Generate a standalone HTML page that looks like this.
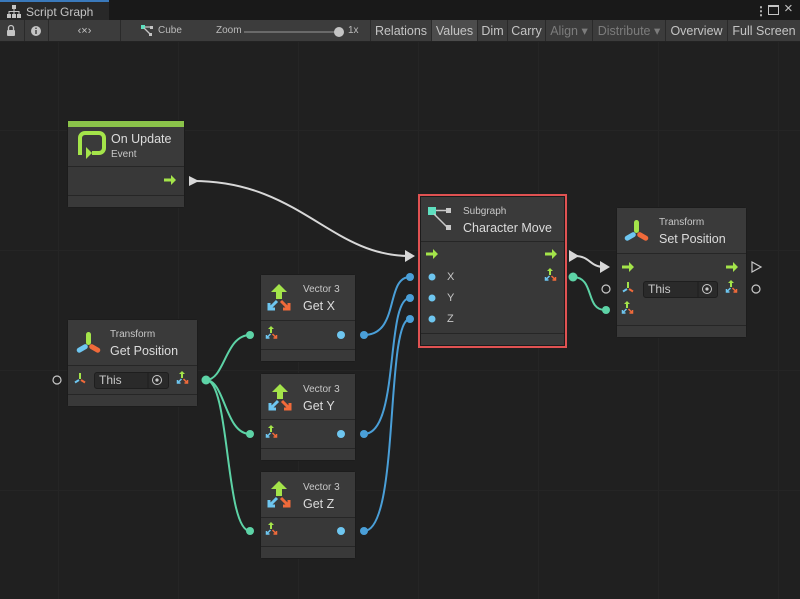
<!DOCTYPE html><html><head><style>
*{margin:0;padding:0;box-sizing:border-box}
body{width:800px;height:599px;overflow:hidden;background:#202020;font-family:"Liberation Sans",sans-serif;position:relative}
.grid{position:absolute;left:0;top:42px;width:800px;height:557px;background-image:linear-gradient(#252525 1px,transparent 1px),linear-gradient(90deg,#252525 1px,transparent 1px);background-size:120px 120px;background-position:58px 88px}
.tabbar{position:absolute;left:0;top:0;width:800px;height:20px;background:#191919}
.tab{position:absolute;left:0;top:0;width:109px;height:21px;background:#282828;border-top:2px solid #3a79bb;color:#c4c4c4;font-size:12px;padding:3px 0 0 26px}
.tb{position:absolute;left:0;top:20px;width:800px;height:22px;background:#3c3c3c;border-bottom:1px solid #232323;color:#c4c4c4;font-size:12.5px}
.tb span{position:absolute;top:0;height:21px;line-height:22px;border-left:1px solid #2a2a2a}
.node{position:absolute;background:#383838;border:1px solid #1c1c1c;border-radius:3px;color:#d2d2d2}
.hd{position:absolute;left:0;right:0;top:0;border-bottom:1px solid #262626;background:#3a3a3a}
.ft{position:absolute;left:0;right:0;bottom:0;height:12px;border-top:1px solid #262626;background:#393939}
.sm{position:absolute;font-size:10px;color:#c8c8c8}
.lg{position:absolute;font-size:12.5px;color:#dcdcdc}
.fld{position:absolute;background:#2a2a2a;border:1px solid #1e1e1e;border-radius:3px;font-size:12px;color:#c8c8c8;padding-left:4px;line-height:14px}
svg{position:absolute;left:0;top:0}
</style></head><body>
<div class="grid"></div>
<div class="tabbar"></div>
<div class="tab">Script Graph</div>
<svg width="20" height="20" style="left:7px;top:4px"><g fill="#c4c4c4"><rect x="5" y="1" width="4" height="4"/><rect x="6.5" y="5" width="1" height="3"/><rect x="1.5" y="7" width="11" height="1"/><rect x="1.5" y="7" width="1" height="3"/><rect x="6.5" y="7" width="1" height="3"/><rect x="11.5" y="7" width="1" height="3"/><rect x="0" y="10" width="4" height="4"/><rect x="5" y="10" width="4" height="4"/><rect x="10" y="10" width="4" height="4"/></g></svg>
<div style="position:absolute;left:755px;top:4px;color:#c4c4c4;font-size:12px;font-weight:bold">⋮</div>
<div style="position:absolute;left:768px;top:5px;width:11px;height:10px;border:1px solid #c4c4c4;border-top-width:2px"></div>
<div style="position:absolute;left:784px;top:0px;color:#c4c4c4;font-size:15px">×</div>
<div class="tb">
<span style="left:0;width:24px;border:0"></span>
<span style="left:24px;width:24px"></span>
<span style="left:48px;width:72px;text-align:center;font-size:11px">‹×›</span>
<span style="left:120px;width:250px;font-size:10px;color:#bbb"><b style="position:absolute;left:37px;font-weight:normal">Cube</b><b style="position:absolute;left:95px;font-weight:normal">Zoom</b><b style="position:absolute;left:227px;font-weight:normal">1x</b></span>
<span style="left:370px;width:61px;text-align:center">Relations</span>
<span style="left:431px;width:46px;text-align:center;background:#4c4c4c">Values</span>
<span style="left:477px;width:30px;text-align:center">Dim</span>
<span style="left:507px;width:38px;text-align:center">Carry</span>
<span style="left:545px;width:47px;text-align:center;color:#7c7c7c">Align ▾</span>
<span style="left:592px;width:73px;text-align:center;color:#7c7c7c">Distribute ▾</span>
<span style="left:665px;width:62px;text-align:center">Overview</span>
<span style="left:727px;width:73px;text-align:center">Full Screen</span>
</div>
<svg width="800" height="45">
<g fill="#c4c4c4"><rect x="7" y="30" width="8" height="6" rx="1"/><path d="M8.5 30v-2a2.5 2.5 0 0 1 5 0v2" stroke="#c4c4c4" fill="none" stroke-width="1.3"/><circle cx="36" cy="31" r="5"/></g>
<rect x="35.3" y="30" width="1.4" height="4" fill="#3c3c3c"/><rect x="35.3" y="27.6" width="1.4" height="1.4" fill="#3c3c3c"/>
<rect x="141" y="25" width="4" height="4" fill="#5fe0c0"/><path d="M145 27h6M144 28l6 6" stroke="#c4c4c4" stroke-width="1.3"/><rect x="150" y="26" width="3" height="3" fill="#c4c4c4"/><rect x="149" y="33" width="3" height="3" fill="#c4c4c4"/>
<rect x="244" y="31" width="96" height="2" fill="#6a6a6a"/><circle cx="339" cy="32" r="5" fill="#c4c4c4"/>
</svg>

<svg width="800" height="599" style="top:0">
<g fill="none" stroke-width="2">
<path d="M193 181 C300 181 330 256 410 256" stroke="#d8d8d8"/>
<path d="M575 256 C590 256 590 267 604 267" stroke="#d8d8d8"/>
<g stroke="#5dd3a6"><path d="M206 380 C225 380 225 335 250 335"/><path d="M206 380 C225 380 225 434 250 434"/><path d="M206 380 C230 380 225 531 250 531"/><path d="M573 277 C595 277 585 310 605 310"/></g>
<g stroke="#4a9fd8"><path d="M364 335 C400 335 385 277 410 277"/><path d="M364 434 C400 434 385 298 410 298"/><path d="M364 531 C400 531 385 319 410 319"/></g>
</g>
<g fill="#d8d8d8"><path d="M189 176l10 5-10 5z"/><path d="M405 250l10 6-10 6z"/><path d="M569 250l10 6-10 6z"/><path d="M600 261l10 6-10 6z"/></g>
<g fill="#5dd3a6"><circle cx="206" cy="380" r="4.5"/><circle cx="250" cy="335" r="4"/><circle cx="250" cy="434" r="4"/><circle cx="250" cy="531" r="4"/><circle cx="573" cy="277" r="4.5"/><circle cx="606" cy="310" r="4"/></g>
<g fill="#4a9fd8"><circle cx="364" cy="335" r="4"/><circle cx="364" cy="434" r="4"/><circle cx="364" cy="531" r="4"/><circle cx="410" cy="277" r="4"/><circle cx="410" cy="298" r="4"/><circle cx="410" cy="319" r="4"/></g>
<g fill="none" stroke="#c8c8c8" stroke-width="1.2"><circle cx="57" cy="380" r="4"/><circle cx="606" cy="289" r="4"/><circle cx="756" cy="289" r="4"/><path d="M752 262l9 5-9 5z"/></g>
</svg>

<!-- On Update -->
<div class="node" style="left:67px;top:120px;width:118px;height:88px">
<div style="position:absolute;left:0;right:0;top:0;height:6px;background:#8bc34a"></div>
<div class="hd" style="top:6px;height:40px"></div>
<div class="lg" style="left:43px;top:11px">On Update</div><div class="sm" style="left:43px;top:28px">Event</div>
<div class="ft"></div>
</div>
<!-- Subgraph -->
<div style="position:absolute;left:418px;top:194px;width:149px;height:154px;border:2px solid #e05252"></div>
<div class="node" style="left:420px;top:196px;width:145px;height:150px">
<div class="hd" style="height:45px"></div>
<div class="sm" style="left:42px;top:9px">Subgraph</div><div class="lg" style="left:42px;top:24px">Character Move</div>
<div style="position:absolute;left:26px;top:70px;font-size:11px;color:#c8c8c8;line-height:21px">X<br>Y<br>Z</div>
<div class="ft"></div>
</div>
<!-- Set Position -->
<div class="node" style="left:616px;top:207px;width:131px;height:131px">
<div class="hd" style="height:46px"></div>
<div class="sm" style="left:42px;top:9px">Transform</div><div class="lg" style="left:42px;top:24px">Set Position</div>
<div class="fld" style="left:26px;top:73px;width:75px;height:17px">This</div>
<div class="ft"></div>
</div>
<!-- Get Position -->
<div class="node" style="left:67px;top:319px;width:131px;height:88px">
<div class="hd" style="height:46px"></div>
<div class="sm" style="left:42px;top:9px">Transform</div><div class="lg" style="left:42px;top:24px">Get Position</div>
<div class="fld" style="left:26px;top:52px;width:75px;height:17px">This</div>
<div class="ft"></div>
</div>
<!-- Get X/Y/Z -->
<div class="node" style="left:260px;top:274px;width:96px;height:88px"><div class="hd" style="height:46px"></div><div class="sm" style="left:42px;top:9px">Vector 3</div><div class="lg" style="left:42px;top:24px">Get X</div><div class="ft"></div></div>
<div class="node" style="left:260px;top:373px;width:96px;height:88px"><div class="hd" style="height:46px"></div><div class="sm" style="left:42px;top:10px">Vector 3</div><div class="lg" style="left:42px;top:25px">Get Y</div><div class="ft"></div></div>
<div class="node" style="left:260px;top:471px;width:96px;height:88px"><div class="hd" style="height:46px"></div><div class="sm" style="left:42px;top:10px">Vector 3</div><div class="lg" style="left:42px;top:25px">Get Z</div><div class="ft"></div></div>

<svg width="800" height="599">
<defs>
<g id="arr"><path d="M0 -1.5h7v-3.5l5 5-5 5v-3.5h-7z" fill="#a4e44a"/></g>
<g id="v3s"><path d="M5 0l3 3h-2v4h-2v-4h-2z" fill="#a4e44a"/><path d="M4.5 8l-4 4m0-3v3h3" stroke="#6ec6f0" stroke-width="1.5" fill="none"/><path d="M6.5 8l4 4m0-3v3h-3" stroke="#f06a3a" stroke-width="1.5" fill="none"/></g>
<g id="v3b"><path d="M12 0l8 8h-5v7h-6v-7h-5z" fill="#a4e44a"/><path d="M10 17l-8 8m0-6v6h6" stroke="#6ec6f0" stroke-width="3" fill="none"/><path d="M14 17l8 8m0-6v6h-6" stroke="#f06a3a" stroke-width="3" fill="none"/></g>
<g id="trb"><rect x="10" y="0" width="5" height="13" rx="2.5" fill="#a4e44a"/><rect x="0" y="14" width="12" height="5" rx="2.5" transform="rotate(-30 6 16)" fill="#6ec6f0"/><rect x="13" y="14" width="12" height="5" rx="2.5" transform="rotate(30 19 16)" fill="#f06a3a"/></g>
<g id="trs"><rect x="4" y="0" width="2" height="6" fill="#a4e44a"/><path d="M4 7l-4 2.5" stroke="#6ec6f0" stroke-width="2"/><path d="M6 7l4 2.5" stroke="#f06a3a" stroke-width="2"/></g>
</defs>
<path d="M80 155v-17a5 5 0 0 1 5-5h14a5 5 0 0 1 5 5v10a5 5 0 0 1-5 5h-7" stroke="#a4e44a" stroke-width="4" fill="none"/><path d="M86 147l6 6-6 6z" fill="#a4e44a"/>
<use href="#arr" x="164" y="180"/>
<rect x="428" y="207" width="8" height="8" fill="#5fe0c0"/><rect x="446" y="208" width="5" height="5" fill="#c8c8c8"/><rect x="446" y="225" width="5" height="5" fill="#c8c8c8"/><path d="M436 210.5h10M434 214l13 13" stroke="#c8c8c8" stroke-width="1.5"/>
<use href="#arr" x="426" y="254"/><use href="#arr" x="545" y="254"/><use href="#v3s" x="545" y="268"/>
<g fill="#6ec6f0"><circle cx="432" cy="277" r="3.5"/><circle cx="432" cy="298" r="3.5"/><circle cx="432" cy="319" r="3.5"/><circle cx="341" cy="335" r="4"/><circle cx="341" cy="434" r="4"/><circle cx="341" cy="531" r="4"/></g>
<use href="#trb" x="624" y="220"/>
<use href="#arr" x="622" y="267"/><use href="#arr" x="726" y="267"/>
<use href="#trs" x="623" y="282"/><use href="#v3s" x="726" y="280"/><use href="#v3s" x="622" y="301"/>
<circle cx="707" cy="289" r="4.5" stroke="#c8c8c8" fill="none"/><circle cx="707" cy="289" r="1.6" fill="#c8c8c8"/><path d="M698 281v16" stroke="#1e1e1e"/>
<use href="#trb" x="76" y="332"/>
<use href="#trs" x="75" y="373"/><use href="#v3s" x="177" y="371"/>
<circle cx="157" cy="380" r="4.5" stroke="#c8c8c8" fill="none"/><circle cx="157" cy="380" r="1.6" fill="#c8c8c8"/><path d="M148 372v16" stroke="#1e1e1e"/>
<use href="#v3b" x="267" y="284"/><use href="#v3s" x="266" y="326"/>
<use href="#v3b" x="268" y="384"/><use href="#v3s" x="266" y="425"/>
<use href="#v3b" x="267" y="481"/><use href="#v3s" x="266" y="522"/>
</svg>
</body></html>
